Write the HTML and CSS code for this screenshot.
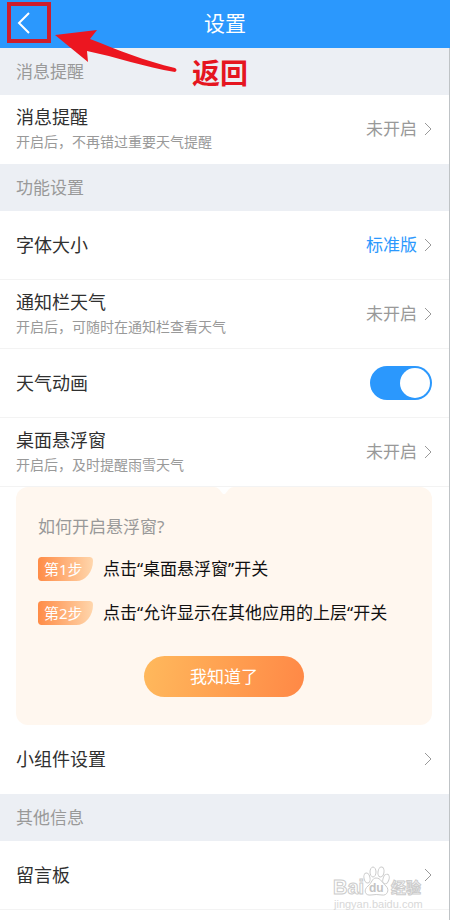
FILE: index.html
```html
<!DOCTYPE html>
<html lang="zh-CN">
<head>
<meta charset="utf-8">
<meta name="viewport" content="width=device-width, initial-scale=1">
<title>设置</title>
<link rel="stylesheet" href="styles.css">
</head>
<body>
<div class="screen">
  <header class="topbar">
    <button class="back" type="button" aria-label="返回">
      <svg width="14" height="22" viewBox="0 0 14 22"><path d="M12 1 2 11 12 21"/></svg>
    </button>
    <h1>设置</h1>
  </header>

  <main>
    <h2 class="section">消息提醒</h2>
    <a class="row last" href="#message">
      <span class="label"><span class="name">消息提醒</span><span class="hint">开启后，不再错过重要天气提醒</span></span>
      <span class="value">未开启</span>
      <svg class="chevron" width="8" height="14" viewBox="0 0 8 14"><path d="M1 1 7 7 1 13"/></svg>
    </a>

    <h2 class="section">功能设置</h2>
    <a class="row" href="#font">
      <span class="label"><span class="name">字体大小</span></span>
      <span class="value active">标准版</span>
      <svg class="chevron" width="8" height="14" viewBox="0 0 8 14"><path d="M1 1 7 7 1 13"/></svg>
    </a>
    <a class="row" href="#notice">
      <span class="label"><span class="name">通知栏天气</span><span class="hint">开启后，可随时在通知栏查看天气</span></span>
      <span class="value">未开启</span>
      <svg class="chevron" width="8" height="14" viewBox="0 0 8 14"><path d="M1 1 7 7 1 13"/></svg>
    </a>
    <div class="row">
      <label class="label" for="motion"><span class="name">天气动画</span></label>
      <input class="switch" id="motion" type="checkbox" role="switch" checked>
    </div>
    <a class="row" href="#float">
      <span class="label"><span class="name">桌面悬浮窗</span><span class="hint">开启后，及时提醒雨雪天气</span></span>
      <span class="value">未开启</span>
      <svg class="chevron" width="8" height="14" viewBox="0 0 8 14"><path d="M1 1 7 7 1 13"/></svg>
    </a>

    <section class="guide">
      <svg class="notch" width="20" height="8" viewBox="0 0 20 8"><path d="M0 0Q3 0 5 2L8.500 6.500Q10 8 11.500 6.500L15 2Q17 0 20 0Z"/></svg>
      <h3>如何开启悬浮窗?</h3>
      <ol>
        <li><span class="step">第1步</span><span>点击“桌面悬浮窗”开关</span></li>
        <li><span class="step">第2步</span><span>点击“允许显示在其他应用的上层“开关</span></li>
      </ol>
      <button class="confirm" type="button">我知道了</button>
    </section>

    <a class="row last" href="#widget">
      <span class="label"><span class="name">小组件设置</span></span>
      <svg class="chevron" width="8" height="14" viewBox="0 0 8 14"><path d="M1 1 7 7 1 13"/></svg>
    </a>

    <h2 class="section">其他信息</h2>
    <a class="row" href="#board">
      <span class="label"><span class="name">留言板</span></span>
      <svg class="chevron" width="8" height="14" viewBox="0 0 8 14"><path d="M1 1 7 7 1 13"/></svg>
    </a>
  </main>

  <div class="frame"></div>
  <svg class="arrow" width="124" height="46" viewBox="0 0 124 46"><path d="M1 6 43 1 36 10C64 21 91 32 121 39Q124 41 121 43C91 38 62 28 33 22L34 33Z"/></svg>
  <strong class="note">返回</strong>
  <svg class="watermark" width="96" height="46" viewBox="0 0 96 46">
    <g class="outline">
      <ellipse cx="35" cy="12" rx="3" ry="5" transform="rotate(-12 35 12)"/>
      <ellipse cx="41" cy="6" rx="3" ry="5"/>
      <ellipse cx="49" cy="6" rx="3" ry="5" transform="rotate(8 49 6)"/>
      <ellipse cx="54" cy="13" rx="3" ry="5" transform="rotate(18 54 13)"/>
      <path d="M44 12C49 12 50 17 54 20C58 24 55 30 50 29Q44 28 39 29C33 30 31 24 36 20C40 17 40 12 44 12Z"/>
      <text class="brand" x="1" y="28">Bai</text>
      <text class="cn" x="59" y="27">经验</text>
    </g>
    <text class="du" x="37" y="26">du</text>
    <text class="url" x="2" y="42">jingyan.baidu.com</text>
  </svg>
</div>
</body>
</html>
```
FILE: styles.css
```css
* {
  box-sizing: border-box;
}

body {
  margin: 0;
  background: #fff;
  color: #303030;
  font-family: "Noto Sans", "Noto Sans CJK SC", sans-serif;
  font-size: 17px;
  line-height: 24px;
}

h1, h2, h3, ol {
  margin: 0;
  padding: 0;
  font-size: 17px;
  font-weight: 400;
}

button {
  border: 0;
  font: inherit;
  color: #fff;
}

svg {
  display: block;
  flex: none;
}

.screen {
  position: relative;
  display: flex;
  flex-direction: column;
  min-height: 100vh;
}

.topbar {
  display: grid;
  grid-template-columns: 48px 1fr 48px;
  align-items: center;
  height: 48px;
  background: #2b98fd;
  color: #fff;
}

.topbar h1 {
  font-size: 21px;
  text-align: center;
  padding-bottom: 2px;
}

.back {
  padding: 0 0 2px 17px;
  background: none;
}

.back path {
  fill: none;
  stroke: #fff;
  stroke-width: 2;
}

main {
  flex: 1;
  border-right: 1px solid #bfc3c6;
}

.section {
  display: flex;
  align-items: center;
  height: 47px;
  padding: 0 17px 0 16px;
  background: #eceff4;
  color: #999;
}

.row {
  display: flex;
  align-items: center;
  gap: 7px;
  min-height: 69px;
  padding: 0 17px 0 16px;
  border-bottom: 1px solid #f3f3f3;
  color: inherit;
  text-decoration: none;
}

.last {
  border-bottom-color: transparent;
}

.label {
  display: flex;
  flex: 1;
  flex-direction: column;
}

.name {
  font-size: 18px;
  line-height: 26px;
}

.hint {
  color: #999;
  font-size: 14px;
}

.value {
  color: #999;
}

.active {
  color: #2b98fd;
}

.chevron path {
  fill: none;
  stroke: #999;
  stroke-width: 1;
}

.switch {
  appearance: none;
  display: flex;
  justify-content: flex-end;
  width: 62px;
  height: 34px;
  margin: 0;
  padding: 2px;
  border-radius: 17px;
  background: #2b98fd;
}

.switch::before {
  content: "";
  width: 30px;
  height: 30px;
  border-radius: 50%;
  background: #fff;
}

.switch:not(:checked) {
  justify-content: flex-start;
  background: #ccc;
}

.guide {
  position: relative;
  display: flex;
  flex-direction: column;
  margin: 0 17px 0 16px;
  padding: 28px 22px;
  border-radius: 12px;
  background: #fff7ef;
}

.guide h3 {
  color: #999;
}

.notch {
  position: absolute;
  top: 0;
  left: calc(50% - 10px);
  fill: #fff;
}

.guide ol {
  display: flex;
  flex-direction: column;
  gap: 20px;
  margin: 18px 0 31px;
  color: #111;
  list-style: none;
}

.guide li {
  display: flex;
  align-items: center;
  gap: 10px;
}

.step {
  width: 55px;
  padding-left: 6px;
  border-radius: 4px 4px 18px 4px / 4px 4px 22px 4px;
  background: linear-gradient(90deg, #ff8c47, #ffd6ac);
  color: #fff;
  font-size: 15px;
}

.confirm {
  align-self: center;
  width: 160px;
  height: 41px;
  border-radius: 21px;
  background: linear-gradient(100deg, #ffb95c, #ff8846);
}

.frame {
  position: absolute;
  top: 2px;
  left: 7px;
  width: 44px;
  height: 41px;
  border: 4px solid #ce1d2c;
  pointer-events: none;
}

.arrow {
  position: absolute;
  top: 29px;
  left: 54px;
  fill: #ec1620;
}

.note {
  position: absolute;
  top: 56px;
  left: 192px;
  color: #e5151f;
  font-size: 28px;
  line-height: 34px;
}

.watermark {
  position: absolute;
  top: 866px;
  left: 332px;
  pointer-events: none;
}

.outline {
  fill: #fff;
  stroke: #ccc;
  stroke-width: 1;
}

.brand {
  font: 700 20px "Liberation Sans", sans-serif;
}

.du {
  fill: #c4c4c4;
  font: 700 12px "Liberation Sans", sans-serif;
}

.cn {
  font: 700 15px "Noto Sans CJK SC", sans-serif;
}

.url {
  fill: #d8d8d8;
  font: 11px "Liberation Sans", sans-serif;
}
```
